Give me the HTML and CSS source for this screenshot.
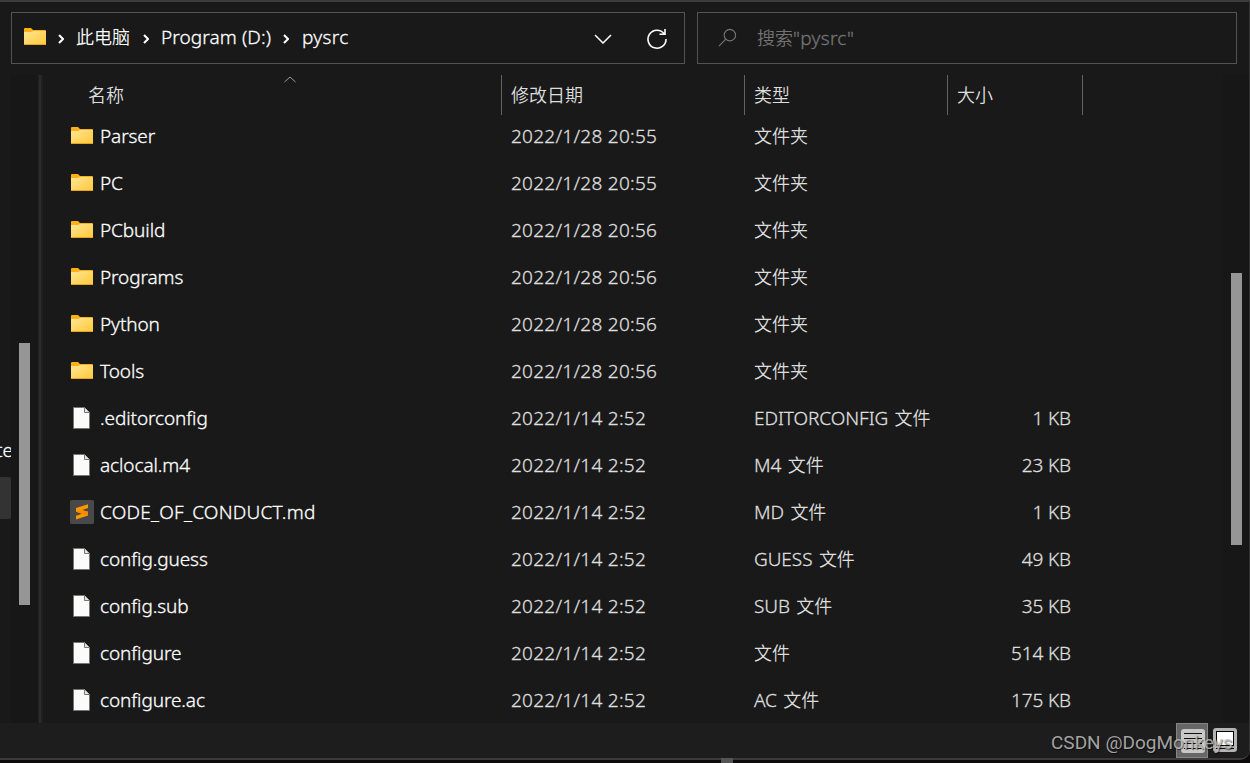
FILE: index.html
```html
<!DOCTYPE html>
<html lang="zh-CN">
<head>
  <meta charset="UTF-8" />
  <title>pysrc</title>
  <link rel="stylesheet" href="styles.css">
</head>
<body>

  <!-- Icons -->
  <svg class="defs" width="0" height="0">
    <defs>
      <linearGradient id="folderFill" x1="0" y1="0" x2="1" y2="1">
        <stop offset="0" stop-color="#ffe596" />
        <stop offset="1" stop-color="#ffc937" />
      </linearGradient>
      <symbol id="folder" viewBox="0 0 22 17">
        <path d="M0 1 Q0 0 1 0 H7 L9 2 H21 Q22 2 22 3 V8 H0 Z" fill="#fbb017" />
        <path d="M0 4 H7 L9 3 H22 V16 Q22 17 21 17 H1 Q0 17 0 16 Z" fill="url(#folderFill)" />
        <path d="M0 16.5 H22" stroke="#e9a21a" />
      </symbol>
      <symbol id="file" viewBox="0 0 17 22">
        <path d="M.5 .5 H11.5 L16.5 5.5 V21.5 H.5 Z" fill="#fbfbfb" stroke="#77756f" />
        <path d="M11.5 .5 V5.5 H16.5" fill="#e4e4e4" stroke="#77756f" />
      </symbol>
      <symbol id="sublime" viewBox="0 0 24 24">
        <rect width="24" height="24" rx="1.5" fill="#484848" />
        <path d="M6 8 L18 4.2 V8 L12 10 L18 11.8 V15.5 L6 19.6 V15.8 L12 13.8 L6 11.8 Z" fill="#ff9800" />
        <path d="M6 11.8 L12 13.8 L18 15.5 V11.8 L12 10 Z" fill="#f58a00" />
      </symbol>
    </defs>
  </svg>

  <div class="window">

    <!-- Address bar and search -->
    <div class="toolbar">
      <div class="address">
        <svg class="icon-folder"><use href="#folder" /></svg>
        <svg class="sep" viewBox="0 0 6 10"><path d="M1 1 L5 5 L1 9" /></svg>
        <span class="crumb zh">此电脑</span>
        <svg class="sep" viewBox="0 0 6 10"><path d="M1 1 L5 5 L1 9" /></svg>
        <span class="crumb">Program (D:)</span>
        <svg class="sep" viewBox="0 0 6 10"><path d="M1 1 L5 5 L1 9" /></svg>
        <span class="crumb last">pysrc</span>
        <svg class="dropdown" viewBox="0 0 18 10"><path d="M1 1 L9 9 L17 1" /></svg>
        <svg class="refresh" viewBox="0 0 22 22">
          <path d="M18.2 5.8 A9 9 0 1 0 20 11 M19 1 V6.3 H13.5" />
        </svg>
      </div>
      <div class="search">
        <svg class="magnifier" viewBox="0 0 20 20">
          <circle cx="12.5" cy="7.5" r="6" /><path d="M8.2 11.8 L1 19" />
        </svg>
        <span><span class="zh">搜索</span>"pysrc"</span>
      </div>
    </div>

    <div class="body">
      <!-- Navigation pane, almost scrolled out -->
      <div class="nav">
        <div class="nav-label">te</div>
        <div class="nav-item"></div>
      </div>
      <div class="track nav-track"><div class="thumb"></div></div>
      <div class="splitter"></div>

      <div class="content">
        <div class="header zh">
          <div class="col-name">名称
            <svg class="sort" viewBox="0 0 12 7"><path d="M.5 6 L6 1 L11.5 6" /></svg>
          </div>
          <div>修改日期</div>
          <div>类型</div>
          <div>大小</div>
          <div></div>
        </div>

        <div class="list">
          <div class="row"><div class="name"><svg class="icon-folder"><use href="#folder" /></svg><span>Parser</span></div><div class="date">2022/1/28 20:55</div><div class="type"><span class="zh">文件夹</span></div><div class="size"></div></div>
          <div class="row"><div class="name"><svg class="icon-folder"><use href="#folder" /></svg><span>PC</span></div><div class="date">2022/1/28 20:55</div><div class="type"><span class="zh">文件夹</span></div><div class="size"></div></div>
          <div class="row"><div class="name"><svg class="icon-folder"><use href="#folder" /></svg><span>PCbuild</span></div><div class="date">2022/1/28 20:56</div><div class="type"><span class="zh">文件夹</span></div><div class="size"></div></div>
          <div class="row"><div class="name"><svg class="icon-folder"><use href="#folder" /></svg><span>Programs</span></div><div class="date">2022/1/28 20:56</div><div class="type"><span class="zh">文件夹</span></div><div class="size"></div></div>
          <div class="row"><div class="name"><svg class="icon-folder"><use href="#folder" /></svg><span>Python</span></div><div class="date">2022/1/28 20:56</div><div class="type"><span class="zh">文件夹</span></div><div class="size"></div></div>
          <div class="row"><div class="name"><svg class="icon-folder"><use href="#folder" /></svg><span>Tools</span></div><div class="date">2022/1/28 20:56</div><div class="type"><span class="zh">文件夹</span></div><div class="size"></div></div>
          <div class="row"><div class="name"><svg class="icon-file"><use href="#file" /></svg><span>.editorconfig</span></div><div class="date">2022/1/14 2:52</div><div class="type">EDITORCONFIG <span class="zh">文件</span></div><div class="size">1 KB</div></div>
          <div class="row"><div class="name"><svg class="icon-file"><use href="#file" /></svg><span>aclocal.m4</span></div><div class="date">2022/1/14 2:52</div><div class="type">M4 <span class="zh">文件</span></div><div class="size">23 KB</div></div>
          <div class="row"><div class="name"><svg class="icon-sublime"><use href="#sublime" /></svg><span class="caps">CODE_OF_CONDUCT.md</span></div><div class="date">2022/1/14 2:52</div><div class="type">MD <span class="zh">文件</span></div><div class="size">1 KB</div></div>
          <div class="row"><div class="name"><svg class="icon-file"><use href="#file" /></svg><span>config.guess</span></div><div class="date">2022/1/14 2:52</div><div class="type">GUESS <span class="zh">文件</span></div><div class="size">49 KB</div></div>
          <div class="row"><div class="name"><svg class="icon-file"><use href="#file" /></svg><span>config.sub</span></div><div class="date">2022/1/14 2:52</div><div class="type">SUB <span class="zh">文件</span></div><div class="size">35 KB</div></div>
          <div class="row"><div class="name"><svg class="icon-file"><use href="#file" /></svg><span>configure</span></div><div class="date">2022/1/14 2:52</div><div class="type"><span class="zh">文件</span></div><div class="size">514 KB</div></div>
          <div class="row"><div class="name"><svg class="icon-file"><use href="#file" /></svg><span>configure.ac</span></div><div class="date">2022/1/14 2:52</div><div class="type">AC <span class="zh">文件</span></div><div class="size">175 KB</div></div>
        </div>
      </div>

      <div class="track list-track"><div class="thumb"></div></div>
    </div>

    <!-- Status bar -->
    <div class="status">
      <div class="view selected">
        <svg viewBox="0 0 24 24">
          <rect width="24" height="24" rx="3" fill="#c8c8c8" />
          <path d="M3 4.5 H21 M3 9.5 H21 M3 14.5 H21 M3 19.5 H21" stroke="#111" />
        </svg>
      </div>
      <div class="view">
        <svg viewBox="0 0 24 24">
          <rect width="24" height="24" rx="3" fill="#b4b4b4" />
          <rect x="3.5" y="3.5" width="17" height="14" fill="#fff" stroke="#000" />
          <path d="M3 20.5 H21" stroke="#111" />
        </svg>
      </div>
    </div>
  </div>

  <div class="below"></div>
  <div class="watermark">CSDN @DogMonkeys</div>

</body>
</html>
```
FILE: styles.css
```css
* {
  box-sizing: border-box;
}

body {
  margin: 0;
  width: 1250px;
  height: 763px;
  overflow: hidden;
  position: relative;
  background-color: #0c0a0a;
  color: #fff;
  font-family: 'Noto Sans', 'Noto Sans CJK SC', sans-serif;
  font-size: 19px;
  font-weight: 300;
  -webkit-text-stroke: 0.3px;
}

svg {
  display: block;
  flex: none;
  fill: none;
}

.defs {
  position: absolute;
}

.zh {
  font-family: 'Noto Sans CJK SC', sans-serif;
  font-size: 18px;
  font-weight: 350;
  letter-spacing: 0;
  -webkit-text-stroke: 0;
}

.window {
  width: 1250px;
  height: 760px;
  display: flex;
  flex-direction: column;
  background-color: #191919;
  border-top: 2px solid #3b3b3b;
  border-right: 1px solid #333;
  border-bottom: 2px solid #3b3b3b;
  border-bottom-right-radius: 10px;
}

/* Toolbar */
.toolbar {
  display: flex;
  gap: 12px;
  padding: 10px 12px 0 11px;
  height: 73px;
}

.address,
.search {
  display: flex;
  align-items: center;
  height: 52px;
  border: 1px solid #535353;
}

.address {
  width: 674px;
  padding: 0 16px 2px 12px;
  letter-spacing: 0.1px;
}

.address .zh {
  padding-bottom: 2px;
  padding-right: 1px;
}

.address .last {
  padding-left: 1px;
  letter-spacing: 0.3px;
}

.search {
  flex: 1;
  padding-left: 20px;
  padding-bottom: 2px;
  gap: 20px;
  color: #747474;
  letter-spacing: 0.3px;
}

.icon-folder {
  width: 22px;
  height: 17px;
}

.address .icon-folder {
  margin-bottom: 1px;
}

.sep {
  width: 6px;
  height: 10px;
  margin: 3px 12px 0 12px;
  stroke: #fff;
  stroke-width: 2;
}

.dropdown {
  width: 18px;
  height: 10px;
  margin: 4px 34px 0 auto;
  stroke: #fff;
  stroke-width: 1.5;
}

.refresh {
  width: 22px;
  height: 22px;
  margin-top: 4px;
  stroke: #fff;
  stroke-width: 1.6;
}

.magnifier {
  width: 19px;
  height: 19px;
  stroke: #747474;
  stroke-width: 1.2;
}

/* Panes */
.body {
  display: flex;
  height: 648px;
}

.nav {
  width: 11px;
  overflow: hidden;
  padding-top: 362px;
}

.nav-label {
  height: 26px;
  line-height: 26px;
  margin-left: -4px;
}

.nav-item {
  height: 42px;
  margin-top: 14px;
  background-color: #333;
  border-radius: 0 2px 2px 0;
}

.track {
  background-color: #171717;
}

.thumb {
  width: 11px;
  margin-left: 8px;
  background-color: #969696;
}

.nav-track {
  width: 27px;
  padding-top: 268px;
}

.nav-track .thumb {
  height: 262px;
}

.list-track {
  width: 26px;
  padding-top: 198px;
}

.list-track .thumb {
  height: 272px;
}

.splitter {
  width: 5px;
  background-color: #2b2b2b;
  border-left: 1px solid #202020;
  border-right: 2px solid #202020;
}

.content {
  width: 1180px;
}

/* File list */
.header,
.row {
  display: grid;
  grid-template-columns: 458px 243px 203px 135px 1fr;
}

.header {
  height: 40px;
  line-height: 39px;
  color: #dedede;
}

.header div {
  padding-left: 9px;
  border-left: 1px solid #636363;
}

.header .col-name {
  display: flex;
  padding-left: 45px;
  border-left: none;
}

.sort {
  width: 12px;
  height: 7px;
  margin: 1px 0 0 160px;
  stroke: #9a9a9a;
}

.list {
  margin-top: -3px;
}

.row {
  height: 47px;
  line-height: 47px;
  color: #dedede;
  white-space: nowrap;
}

.row > div {
  padding-left: 10px;
}

.row .name {
  display: flex;
  align-items: center;
  padding-left: 27px;
  color: #fff;
  letter-spacing: -0.1px;
}

.name .caps {
  letter-spacing: 0.25px;
}

.date {
  letter-spacing: 0.27px;
}

.type {
  letter-spacing: -0.05px;
  word-spacing: 1.5px;
}

.name svg {
  margin-right: 7px;
  margin-left: 1px;
}

.name .icon-folder {
  margin-bottom: 2px;
}

.icon-file {
  width: 17px;
  height: 22px;
}

.name .icon-file {
  margin-left: 3px;
  margin-right: 10px;
}

.icon-sublime {
  width: 24px;
  height: 24px;
}

.name .icon-sublime {
  margin-left: 0;
  margin-right: 6px;
}

.row .date,
.row .size {
  padding-top: 1px;
}

.row .size {
  padding-right: 11px;
  text-align: right;
  letter-spacing: -0.1px;
}

/* Status bar */
.status {
  flex: 1;
  display: flex;
  justify-content: flex-end;
  padding-right: 8px;
  background-color: #1d1d1d;
  border-bottom-right-radius: 8px;
}

.view {
  width: 32px;
  height: 35px;
  padding: 5px 4px;
}

.view svg {
  width: 24px;
  height: 24px;
}

.selected {
  margin-right: 1px;
  background-color: #666;
  border: 1px solid #858585;
}

.below {
  position: absolute;
  left: 721px;
  top: 758px;
  width: 12px;
  height: 5px;
  background-color: #555;
}

.watermark {
  position: absolute;
  left: 1051px;
  top: 731px;
  font-family: Roboto, sans-serif;
  font-size: 19px;
  font-weight: 400;
  line-height: 24px;
  color: rgba(190, 190, 190, 0.85);
  text-shadow: 1px 1px 1px rgba(0, 0, 0, 0.5);
  -webkit-text-stroke: 0;
}
```
